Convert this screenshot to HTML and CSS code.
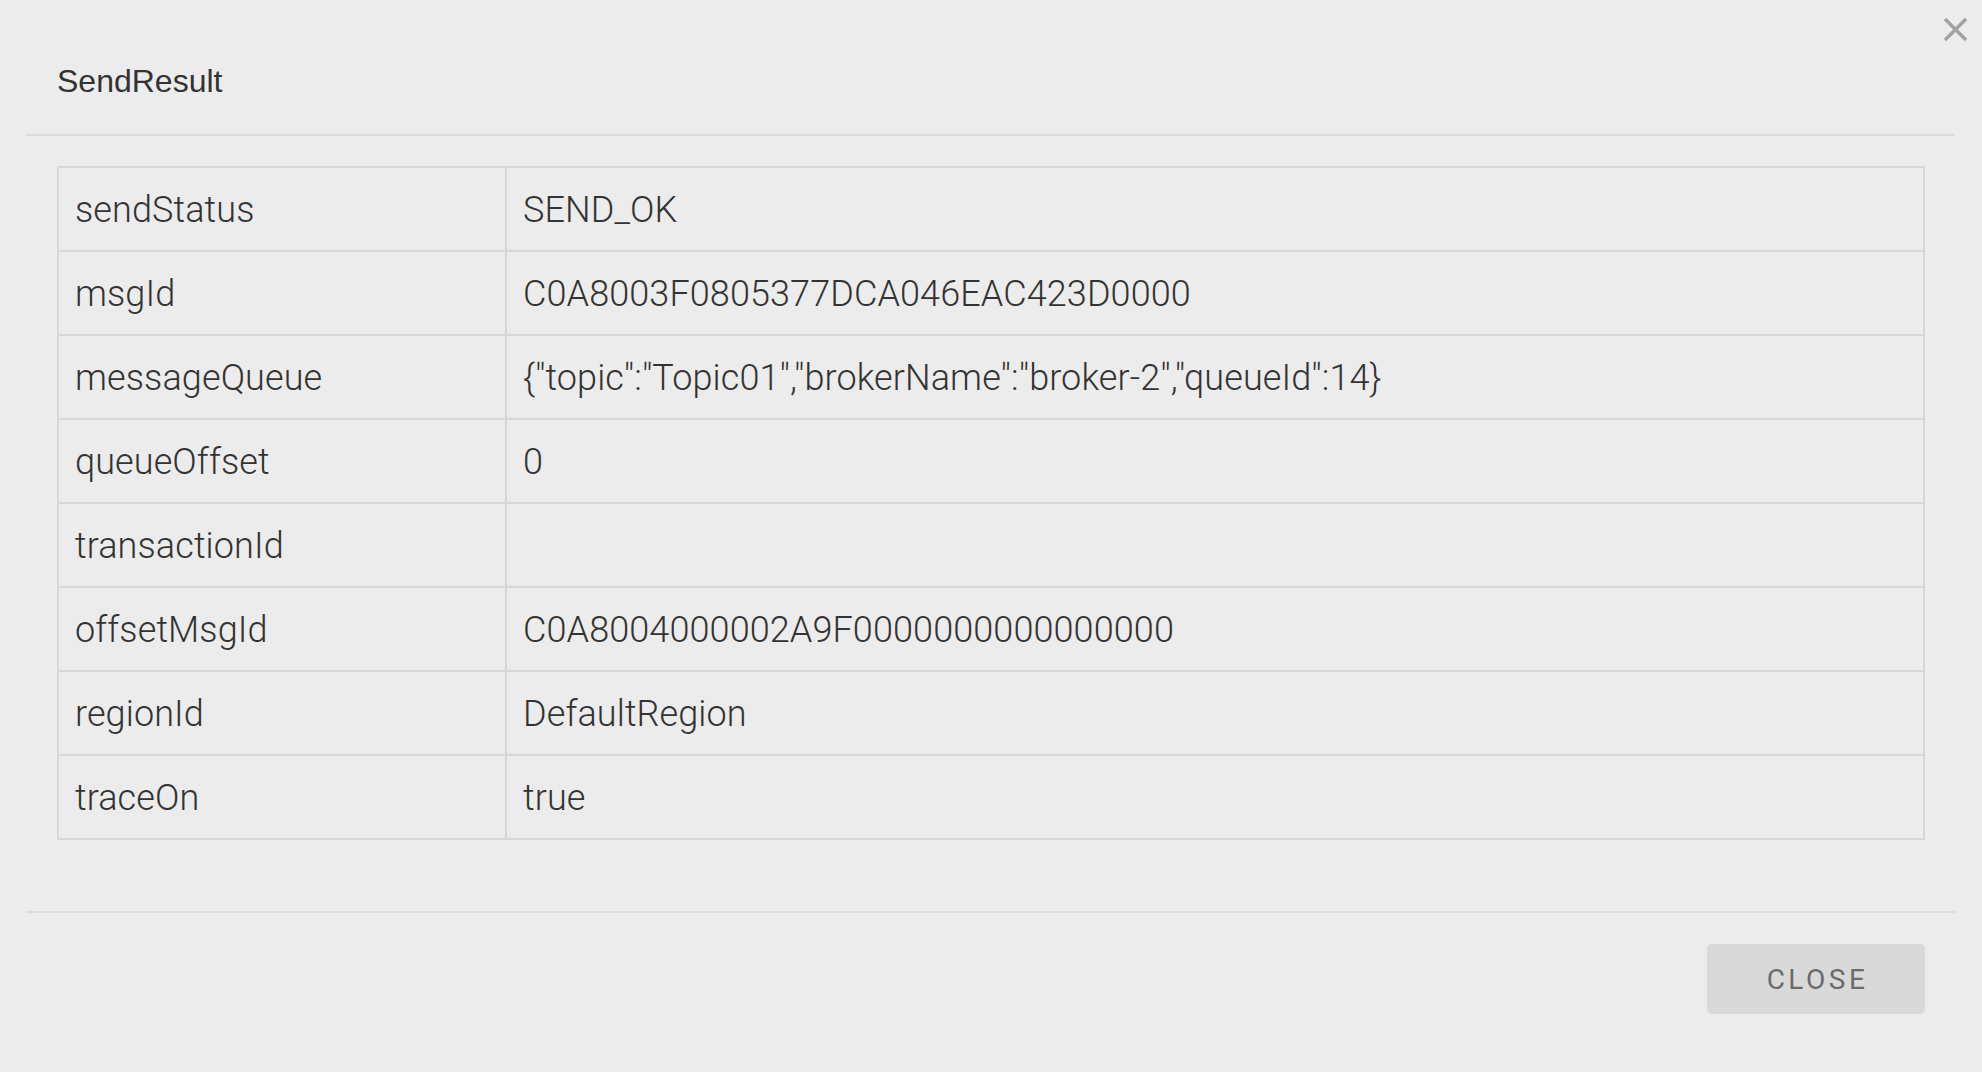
FILE: index.html
```html
<!DOCTYPE html>
<html>
<head>
<meta charset="utf-8">
<title>SendResult</title>
<link rel="stylesheet" href="styles.css">
</head>
<body>
<div class="dialog">
  <button class="close-x" aria-label="close">
    <svg viewBox="0 0 25 25" width="25" height="25"><path d="M2 2 L23 23 M23 2 L2 23" stroke="#a3a3a3" stroke-width="3.5" fill="none"/></svg>
  </button>
  <div class="header"><h2 class="title">SendResult</h2></div>
  <div class="content">
    <table class="result">
      <colgroup><col class="key-col"><col></colgroup>
      <tr><td>sendStatus</td><td>SEND_OK</td></tr>
      <tr><td>msgId</td><td>C0A8003F0805377DCA046EAC423D0000</td></tr>
      <tr><td>messageQueue</td><td>{"topic":"Topic01","brokerName":"broker-2","queueId":14}</td></tr>
      <tr><td>queueOffset</td><td>0</td></tr>
      <tr><td>transactionId</td><td></td></tr>
      <tr><td>offsetMsgId</td><td>C0A8004000002A9F0000000000000000</td></tr>
      <tr><td>regionId</td><td>DefaultRegion</td></tr>
      <tr><td>traceOn</td><td>true</td></tr>
    </table>
  </div>
  <div class="footer"><button class="btn-close">CLOSE</button></div>
</div>
</body>
</html>
```
FILE: styles.css
```css
html, body {
  margin: 0;
  padding: 0;
  background: #ececec;
}
body {
  font-family: "Roboto", "Liberation Sans", Arial, sans-serif;
  color: #333;
}
.dialog {
  position: relative;
  height: 1072px;
  box-sizing: border-box;
  padding: 0 27px 0 26px;
}
.close-x {
  position: absolute;
  left: 1943px;
  top: 17px;
  width: 25px;
  height: 25px;
  padding: 0;
  border: none;
  background: none;
  display: block;
}
.close-x svg { display: block; }
.header {
  padding: 61px 31px 33px;
  border-bottom: 2px solid #dcdcdc;
}
.title {
  margin: 0;
  font-family: "Liberation Sans", Arial, sans-serif;
  font-size: 32px;
  line-height: 40px;
  font-weight: 400;
  color: #333;
}
.content {
  padding: 30px 30px 71px 31px;
}
.result {
  width: 100%;
  border-collapse: collapse;
  border: 2px solid #d6d6d6;
}
.key-col { width: 448px; }
.result td {
  border: 2px solid #d6d6d6;
  padding: 2px 16px 0;
  height: 80px;
  line-height: 80px;
  font-size: 36px;
  font-weight: 300;
  letter-spacing: 0.1px;
  color: #333;
  white-space: nowrap;
}
.footer {
  border-top: 2px solid #dcdcdc;
  padding: 31px 30px;
  display: flex;
  justify-content: flex-end;
}
.btn-close {
  width: 218px;
  height: 70px;
  border: none;
  border-radius: 5px;
  background: #d9d9d9;
  color: #6b6b6b;
  font-family: "Roboto", "Liberation Sans", Arial, sans-serif;
  font-size: 28px;
  font-weight: 400;
  letter-spacing: 3.5px;
  padding: 0 0 0 3px;
}
```
